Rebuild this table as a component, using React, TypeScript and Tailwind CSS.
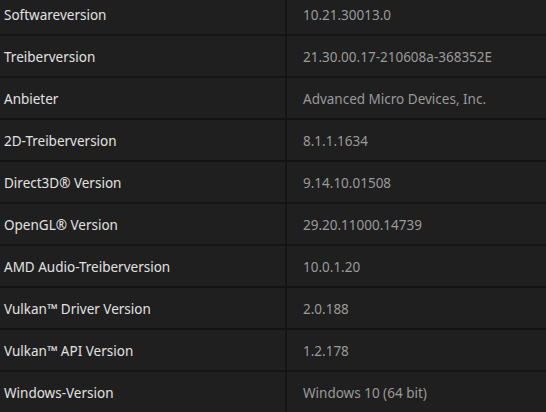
const rows: [string, string][] = [
  ["Softwareversion", "10.21.30013.0"],
  ["Treiberversion", "21.30.00.17-210608a-368352E"],
  ["Anbieter", "Advanced Micro Devices, Inc."],
  ["2D-Treiberversion", "8.1.1.1634"],
  ["Direct3D® Version", "9.14.10.01508"],
  ["OpenGL® Version", "29.20.11000.14739"],
  ["AMD Audio-Treiberversion", "10.0.1.20"],
  ["Vulkan™ Driver Version", "2.0.188"],
  ["Vulkan™ API Version", "1.2.178"],
  ["Windows-Version", "Windows 10 (64 bit)"],
];

export default function App() {
  return (
    <div
      className="w-[546px] h-[412px] overflow-hidden bg-[#141414]"
      style={{ fontFamily: '"Noto Sans", "Open Sans", sans-serif' }}
    >
      <div className="-mt-[6px] flex flex-col gap-[2px]">
        {rows.map(([label, value]) => (
          <div key={label} className="flex h-[40px] gap-[2px]">
            <div className="w-[285px] bg-[#1f1f1f] flex items-center pl-[4px] pt-[2px] text-[13.5px] text-[#e2e2e2]">
              {label}
            </div>
            <div className="flex-1 bg-[#1f1f1f] flex items-center pl-[16px] pt-[2px] text-[13.5px] text-[#9a9a9a]">
              {value}
            </div>
          </div>
        ))}
      </div>
    </div>
  );
}
